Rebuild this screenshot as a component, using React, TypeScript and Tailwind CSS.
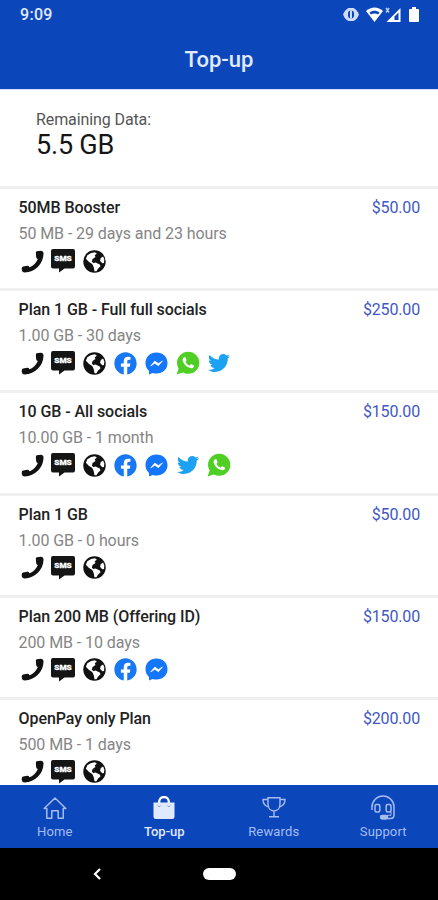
import React from "react";
import { FaFacebook, FaTwitter } from "react-icons/fa";
import { IoLogoWhatsapp } from "react-icons/io";

type Service = "phone" | "sms" | "web" | "facebook" | "messenger" | "whatsapp" | "twitter";

const PLANS: { name: string; details: string; price: string; services: Service[] }[] = [
  { name: "50MB Booster", details: "50 MB - 29 days and 23 hours", price: "$50.00", services: ["phone", "sms", "web"] },
  { name: "Plan 1 GB - Full full socials", details: "1.00 GB - 30 days", price: "$250.00", services: ["phone", "sms", "web", "facebook", "messenger", "whatsapp", "twitter"] },
  { name: "10 GB - All socials", details: "10.00 GB - 1 month", price: "$150.00", services: ["phone", "sms", "web", "facebook", "messenger", "twitter", "whatsapp"] },
  { name: "Plan 1 GB", details: "1.00 GB - 0 hours", price: "$50.00", services: ["phone", "sms", "web"] },
  { name: "Plan 200 MB (Offering ID)", details: "200 MB - 10 days", price: "$150.00", services: ["phone", "sms", "web", "facebook", "messenger"] },
  { name: "OpenPay only Plan", details: "500 MB - 1 days", price: "$200.00", services: ["phone", "sms", "web"] },
];

function PhoneIcon() {
  return (
    <svg viewBox="0 0 24 24" className="size-[23px]">
      <path d="M16.500 1.200L20.500.8Q23.500.8 23.500 4C23.300 14.500 14.500 23.300 4 23.500Q1.300 23.500.8 21L.8 19Q1 17.700 2.300 17.300L6.500 16.500Q8 16.300 8.800 18C12.700 16.500 16.300 13 17.500 9.300Q15.800 8.600 15.800 7.200L15.500 2.800Q15.500 1.400 16.500 1.200z" fill="#111" />
    </svg>
  );
}

function SmsIcon() {
  return (
    <svg viewBox="0 0 24 24" className="size-6">
      <path d="M2 0h20a2 2 0 0 1 2 2v15.500a2 2 0 0 1-2 2H13.500L8 23.500v-4H2a2 2 0 0 1-2-2V2a2 2 0 0 1 2-2z" fill="#151515" />
      <text x="12" y="12" textAnchor="middle" fontSize="7.500" fontWeight="900" textLength="17.500" lengthAdjust="spacingAndGlyphs" fill="#fff" stroke="#fff" strokeWidth="0.300">SMS</text>
    </svg>
  );
}

function GlobeIcon() {
  return (
    <svg viewBox="0 0 24 24" className="size-[23px]">
      <circle cx="12" cy="12" r="11.700" fill="#111" />
      <g fill="#fff">
        <path d="M4.500 5.500L8.500 3l4-.7 2 1.500-2.300 1.700.8 1.800-3 2-.8 3 2 1.500-1.200 1-4-2.500L3 9z" />
        <path d="M9.500 14l3.500-1 4.500 2 .8 2-2.500 2.200-1.800 3h-2L11.200 18z" />
        <path d="M18.500 8.300l2.500-1.500 1.200 3-.3 3.700-1.800.2-2.300-2.500z" />
      </g>
    </svg>
  );
}

function MessengerIcon() {
  return (
    <svg viewBox="0 0 24 24" className="size-[23px]">
      <path d="M12 .5C5.300.5.500 5.300.500 11.500c0 3.400 1.400 6.300 3.700 8.300V23.500l3.700-1.600c1.300.4 2.700.6 4.100.6 6.700 0 11.500-4.800 11.500-11S18.700.500 12 .500z" fill="#1476fb" />
      <path d="M6 14.500l4.200-5 3.700 2.600 4.300-2.800-4.200 5-3.700-2.600z" fill="#fff" stroke="#fff" strokeWidth=".7" strokeLinejoin="round" />
    </svg>
  );
}

function ServiceIcon({ service }: { service: Service }) {
  switch (service) {
    case "phone":
      return <PhoneIcon />;
    case "sms":
      return <SmsIcon />;
    case "web":
      return <GlobeIcon />;
    case "facebook":
      return <FaFacebook className="size-[23px] text-[#1877f2]" />;
    case "messenger":
      return <MessengerIcon />;
    case "whatsapp":
      return <IoLogoWhatsapp className="size-[26px] shrink-0 text-[#4fce23]" />;
    case "twitter":
      return <FaTwitter className="size-[22px] text-[#1da1f2]" />;
  }
}

function StatusBar() {
  return (
    <div className="flex h-[29px] items-center justify-between pl-5 pr-[19px]">
      <span className="text-base font-medium leading-none tracking-[0.300px]">9:09</span>
      <div className="flex items-center">
        <svg viewBox="0 0 16 13" className="mr-[7px] h-[13px] w-4">
          <path d="M5.500 0h5Q14 1.500 16 6.500 14 11.500 10.500 13h-5Q2 11.500 0 6.500 2 1.500 5.500 0z" fill="#d0dcfb" />
          <rect x="5" y="2.500" width="6" height="8" rx="3" fill="#0b47ba" />
          <rect x="7" y="2.500" width="2" height="8" fill="#d0dcfb" />
        </svg>
        <svg viewBox="0 0 17 15" className="h-[15px] w-[17px]">
          <path d="M0 4C5-.7 12-.7 17 4L8.500 15z" fill="#fff" />
          <path d="M3.500 5.500C6.500 3 10.500 3 13.500 5.500L12 7.500C10 6 7 6 5 7.500z" fill="#0b47ba" />
        </svg>
        <svg viewBox="0 0 17 16" className="ml-0.5 mr-[7px] h-4 w-[17px]">
          <path d="M15.500 1v14H1.500z" fill="#fff" />
          <path d="M13.500 5.500v7.500H9.500V9.500z" fill="#0b47ba" />
          <path d="M1 1l3 4.500M4 1L1 5.500" stroke="#b9caf5" strokeWidth="1.500" />
        </svg>
        <svg viewBox="0 0 10 15" className="h-[15px] w-2.5">
          <path d="M3 0h4v2h2q1 0 1 1v11q0 1-1 1H1q-1 0-1-1V3q0-1 1-1h2z" fill="#fff" />
        </svg>
      </div>
    </div>
  );
}

function HomeIcon() {
  return (
    <svg viewBox="0 0 24 24" className="size-6" fill="none" stroke="currentColor" strokeWidth="1.500" strokeLinejoin="round">
      <path d="M3.800 12.500H1.200L12 2l10.800 10.500h-2.600V22.300h-5v-7.500H8.800v7.500h-5z" />
    </svg>
  );
}

function BagIcon() {
  return (
    <svg viewBox="0 0 24 24" className="size-6">
      <path d="M7.200 8V5.800a4.800 4.800 0 0 1 9.600 0V8" fill="none" stroke="#fff" strokeWidth="2.300" />
      <path d="M1.500 6.500h21V20.500q0 2.500-2.500 2.500H4q-2.500 0-2.500-2.500z" fill="#e1e9ff" />
      <path d="M5.700 9.500l1.500 1.500 1.500-1.500M15.300 9.500l1.500 1.500 1.500-1.500" fill="none" stroke="#7d9ce4" strokeWidth="1" />
    </svg>
  );
}

function TrophyIcon() {
  return (
    <svg viewBox="0 0 24 24" className="size-6" fill="none" stroke="currentColor" strokeWidth="1.400">
      <path d="M6 1.800h12v6c0 4.500-2.500 7.200-6 7.200s-6-2.700-6-7.200zM12 15v5.500M7 20.700h10" />
      <path d="M6 3.500H1c0 4 1.500 6.500 6 7.500M18 3.500h5c0 4-1.500 6.500-6 7.500" />
    </svg>
  );
}

function HeadsetIcon() {
  return (
    <svg viewBox="0 0 26 26" className="size-[26px]" fill="none" stroke="currentColor" strokeWidth="1.500">
      <path d="M2 15V12a11 11 0 0 1 22 0V20q0 3.500-3.500 3.500H17" />
      <rect x="5" y="9.500" width="4.800" height="7.500" rx="1.500" />
      <rect x="16.200" y="9.500" width="4.800" height="7.500" rx="1.500" />
      <path d="M21 17v3.300h-4" strokeWidth="1" />
      <rect x="10.500" y="20.500" width="7" height="3.500" rx="1.700" fill="currentColor" />
    </svg>
  );
}

const TABS = [
  { label: "Home", icon: <HomeIcon /> },
  { label: "Top-up", icon: <BagIcon />, active: true },
  { label: "Rewards", icon: <TrophyIcon /> },
  { label: "Support", icon: <HeadsetIcon /> },
];

export default function App() {
  return (
    <div className="flex h-[900px] w-[438px] flex-col overflow-hidden bg-white font-['Roboto',sans-serif]">
      <header className="h-[89px] shrink-0 bg-[#0b47ba] text-[#e1e9ff]">
        <StatusBar />
        <h1 className="pt-[15px] text-center text-[22px] font-medium leading-8">Top-up</h1>
      </header>

      <section className="h-[97px] shrink-0 border-t border-[#d5defc] pl-[36px] pt-5">
        <p className="text-base leading-5 tracking-[-0.100px] text-[#555]">Remaining Data:</p>
        <p className="text-[27px] leading-[30px] tracking-[-0.200px] text-[#151515]">5.5 GB</p>
      </section>

      <main className="min-h-0 flex-1 overflow-hidden">
        {PLANS.map((plan, i) => (
          <div key={i} className="flex h-[102.200px] justify-between border-t-[3px] border-[#f0f0f0] pl-[18.500px] pr-[18px] pt-2">
            <div>
              <h2 className="text-base font-medium leading-[22px] tracking-[-0.070px] text-[#222]">{plan.name}</h2>
              <p className="pt-1 text-base leading-[22px] tracking-[-0.080px] text-[#858585]">{plan.details}</p>
              <div className="flex gap-[7.200px] pl-[1.500px] pt-1">
                {plan.services.map((service) => (
                  <span key={service} className="flex size-6 items-center justify-center">
                    <ServiceIcon service={service} />
                  </span>
                ))}
              </div>
            </div>
            <span className="text-base leading-[22px] tracking-[-0.150px] text-[#4058c4]">{plan.price}</span>
          </div>
        ))}
      </main>

      <nav className="grid h-[63px] shrink-0 grid-cols-4 bg-[#0b47ba]">
        {TABS.map(({ label, icon, active }) => (
          <div key={label} className={`flex flex-col items-center pt-[9px] ${active ? "text-[#e1e9ff]" : "text-[#a6bcf0]"}`}>
            <span className="flex h-[27px] items-center">{icon}</span>
            <span className={`text-[13px] leading-[21px] ${active ? "font-medium" : "tracking-[0.150px]"}`}>{label}</span>
          </div>
        ))}
      </nav>

      <div className="flex h-[52px] shrink-0 items-center bg-black pl-[93px]">
        <svg viewBox="0 0 8 12" className="h-3 w-2" fill="none" stroke="#fff" strokeWidth="2.200">
          <path d="M7 1L2 6l5 5" />
        </svg>
        <span className="ml-[102px] h-3 w-[33px] rounded-full bg-white" />
      </div>
    </div>
  );
}
